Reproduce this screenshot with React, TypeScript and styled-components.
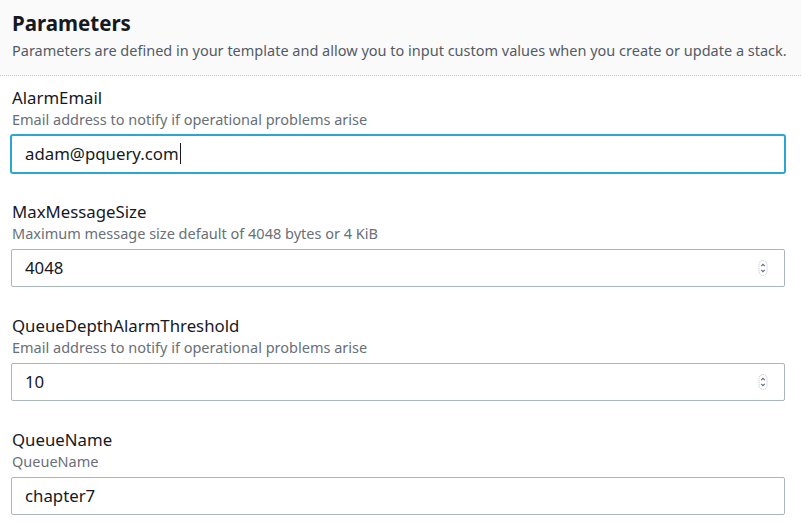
import React from "react";
import styled, { createGlobalStyle } from "styled-components";

const GlobalStyle = createGlobalStyle`
  body {
    margin: 0;
    background: #ffffff;
    font-family: "Noto Sans", "Open Sans", sans-serif;
    color: #16191f;
  }
`;

const Page = styled.div`
  width: 801px;
  min-height: 527px;
  background: #ffffff;
`;

const Header = styled.header`
  background: #fafafa;
  padding: 9px 12px 15px 12px;
  border-bottom: 1px dotted #c9cccf;
`;

const Title = styled.h2`
  margin: 0;
  font-size: 20.5px;
  line-height: 28px;
  font-weight: 700;
  color: #16191f;
`;

const Subtitle = styled.p`
  margin: 3px 0 0 0;
  font-size: 14.5px;
  line-height: 20px;
  color: #545b64;
  white-space: nowrap;
`;

const Form = styled.div`
  display: flex;
  flex-direction: column;
  gap: 28px;
  padding: 11px 16px 0 11px;
`;

const Field = styled.div`
  display: flex;
  flex-direction: column;
`;

const Label = styled.label`
  padding-left: 1px;
  font-size: 16.8px;
  line-height: 22px;
  color: #16191f;
`;

const Description = styled.div`
  padding-left: 1px;
  font-size: 14.5px;
  line-height: 20px;
  color: #687078;
`;

const InputBox = styled.div<{ $focused?: boolean }>`
  position: relative;
  margin-top: 6px;
  height: 38px;
  box-sizing: border-box;
  display: flex;
  align-items: center;
  padding: 0 12px 1px 13px;
  border: 1px solid ${(p) => (p.$focused ? "#2aa6d3" : "#aab7b8")};
  box-shadow: ${(p) => (p.$focused ? "0 0 0 1px #2aa6d3" : "none")};
  border-radius: 2px;
  font-size: 16.8px;
  color: #16191f;
  background: #ffffff;
`;

const Caret = styled.span`
  display: inline-block;
  width: 1px;
  height: 21px;
  margin-left: 1px;
  background: #16191f;
`;

const Spinner = styled.svg`
  position: absolute;
  right: 16px;
  top: 50%;
  transform: translateY(-50%);
`;

function SpinIcon() {
  return (
    <Spinner width="10" height="16" viewBox="0 0 10 16">
      <rect x="1" y="0.5" width="8" height="15" rx="4" fill="none" stroke="#c3c8cc" strokeWidth="1" strokeDasharray="1.2 0.8" />
      <path d="M3.2 6.2 L5 4.4 L6.8 6.2" fill="none" stroke="#5f6b7a" strokeWidth="1.1" />
      <path d="M3.2 9.8 L5 11.6 L6.8 9.8" fill="none" stroke="#5f6b7a" strokeWidth="1.1" />
    </Spinner>
  );
}

type Param = {
  name: string;
  description: string;
  value: string;
  focused?: boolean;
  numeric?: boolean;
};

const params: Param[] = [
  { name: "AlarmEmail", description: "Email address to notify if operational problems arise", value: "adam@pquery.com", focused: true },
  { name: "MaxMessageSize", description: "Maximum message size default of 4048 bytes or 4 KiB", value: "4048", numeric: true },
  { name: "QueueDepthAlarmThreshold", description: "Email address to notify if operational problems arise", value: "10", numeric: true },
  { name: "QueueName", description: "QueueName", value: "chapter7" },
];

export default function App() {
  return (
    <Page>
      <GlobalStyle />
      <Header>
        <Title>Parameters</Title>
        <Subtitle>
          Parameters are defined in your template and allow you to input custom values when you create or update a stack.
        </Subtitle>
      </Header>
      <Form>
        {params.map((p) => (
          <Field key={p.name}>
            <Label>{p.name}</Label>
            <Description>{p.description}</Description>
            <InputBox $focused={p.focused}>
              {p.value}
              {p.focused && <Caret />}
              {p.numeric && <SpinIcon />}
            </InputBox>
          </Field>
        ))}
      </Form>
    </Page>
  );
}
